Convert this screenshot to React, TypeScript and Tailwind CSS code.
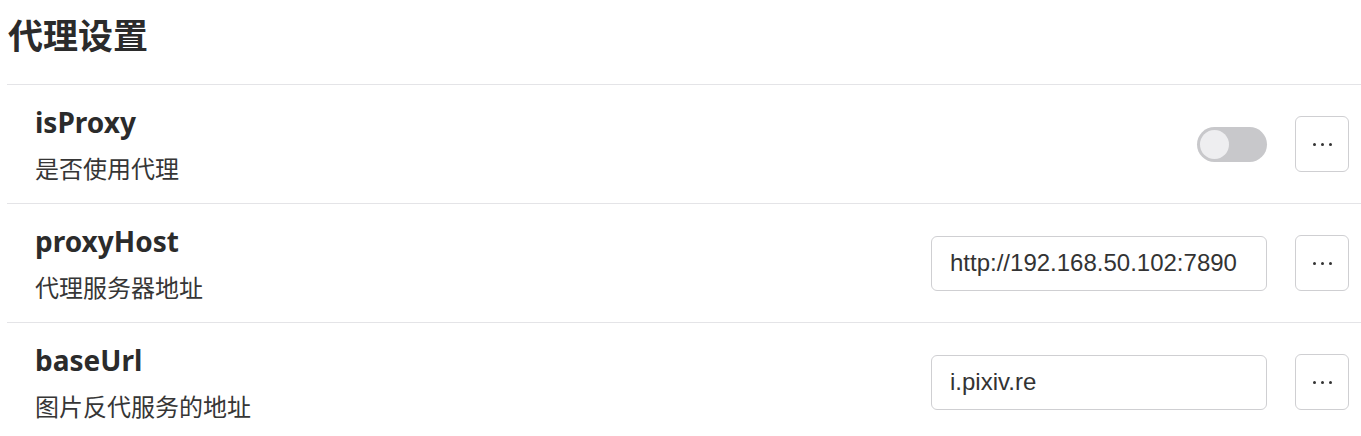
import { useState } from 'react';

const font = "font-['Noto_Sans','Noto_Sans_CJK_SC',sans-serif]";

function MoreButton() {
  return (
    <button className="w-[54px] h-[56px] shrink-0 rounded-[6px] border border-[#cfcfd2] bg-white flex items-center justify-center gap-[5px]">
      <span className="w-[3px] h-[3px] rounded-full bg-[#333]" />
      <span className="w-[3px] h-[3px] rounded-full bg-[#333]" />
      <span className="w-[3px] h-[3px] rounded-full bg-[#333]" />
    </button>
  );
}

function Toggle({ on, onChange }: { on: boolean; onChange: (v: boolean) => void }) {
  return (
    <button
      onClick={() => onChange(!on)}
      className={`w-[70px] h-[35px] rounded-full p-[3px] flex items-center ${on ? 'bg-[#3b82f6] justify-end' : 'bg-[#c8c8cb] justify-start'}`}
    >
      <span className="w-[29px] h-[29px] rounded-full bg-[#eeeef0]" />
    </button>
  );
}

function Row({ name, desc, children }: { name: string; desc: string; children: React.ReactNode }) {
  return (
    <div className="h-[119px] border-t border-[#e4e4e7] flex items-center justify-between pl-[28px] pr-[12px]">
      <div className="flex flex-col">
        <div className="text-[28px] leading-[38px] font-bold text-[#2b2b2b]">{name}</div>
        <div className="mt-[12px] text-[24px] leading-[32px] text-[#363636]">{desc}</div>
      </div>
      <div className="flex items-center gap-[28px]">
        {children}
        <MoreButton />
      </div>
    </div>
  );
}

function TextField({ value, onChange }: { value: string; onChange: (v: string) => void }) {
  return (
    <input
      value={value}
      onChange={(e) => onChange(e.target.value)}
      className="w-[336px] h-[55px] rounded-[6px] border border-[#cfcfd2] px-[18px] text-[24px] text-[#333] font-['Liberation_Sans',Arial,sans-serif] outline-none"
    />
  );
}

export default function App() {
  const [isProxy, setIsProxy] = useState(false);
  const [host, setHost] = useState('http://192.168.50.102:7890');
  const [baseUrl, setBaseUrl] = useState('i.pixiv.re');

  return (
    <div className={`min-h-screen bg-white pl-[7px] ${font}`}>
      <div className="h-[84px] pt-[16px] pl-[1px]">
        <h1 className="text-[35px] leading-[40px] font-bold text-[#2b2b2b]">代理设置</h1>
      </div>
      <Row name="isProxy" desc="是否使用代理">
        <Toggle on={isProxy} onChange={setIsProxy} />
      </Row>
      <Row name="proxyHost" desc="代理服务器地址">
        <TextField value={host} onChange={setHost} />
      </Row>
      <Row name="baseUrl" desc="图片反代服务的地址">
        <TextField value={baseUrl} onChange={setBaseUrl} />
      </Row>
    </div>
  );
}
